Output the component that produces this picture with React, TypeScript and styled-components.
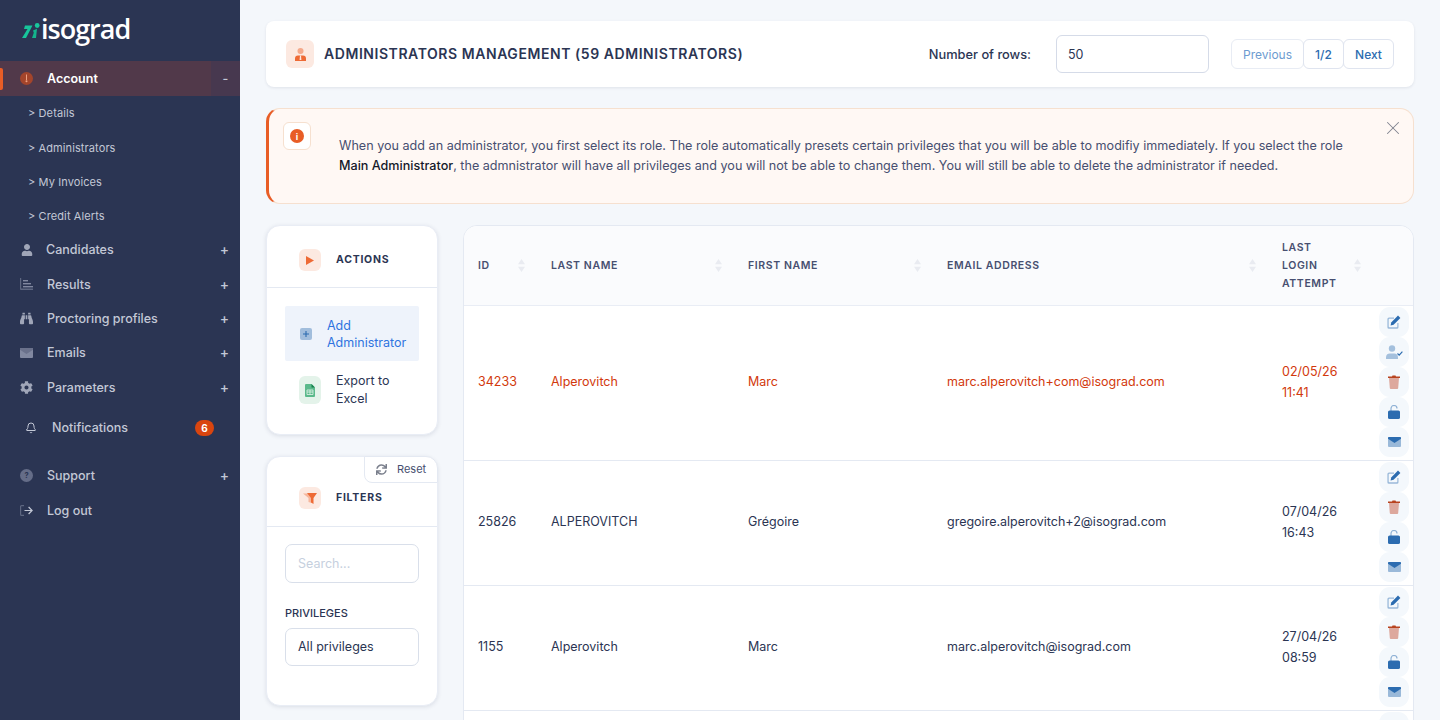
import React from "react";
import styled, { createGlobalStyle } from "styled-components";
import { FaBinoculars, FaCog, FaSync, FaUser } from "react-icons/fa";
import { Bell, X } from "lucide-react";

const GlobalStyle = createGlobalStyle`
  html, body {
    margin: 0;
    height: 720px;
    overflow: hidden;
    background: #f4f7fb;
    font-family: Inter, "Noto Sans", sans-serif;
    color: #2b3553;
  }
  * {
    box-sizing: border-box;
  }
`;

const Layout = styled.div`
  display: flex;
  width: 1440px;
  height: 720px;
  overflow: hidden;
`;

/* sidebar */
const Sidebar = styled.aside`
  flex: 0 0 240px;
  background: #2b3553;
  color: #c3c8d6;
`;
const LogoRow = styled.div`
  height: 61px;
  display: flex;
  align-items: center;
  padding: 0 0 0 22px;
  gap: 1px;
`;
const LogoText = styled.span`
  font-family: "Open Sans", sans-serif;
  font-size: 27px;
  font-weight: 600;
  letter-spacing: -1px;
  color: #fff;
  line-height: 1;
  margin-top: -5px;
`;
const ActiveItem = styled.div`
  height: 35px;
  display: flex;
  align-items: stretch;
  position: relative;
  color: #fff;
  font-size: 12.5px;
  font-weight: 600;
  &::before {
    content: "";
    position: absolute;
    left: 0;
    top: 7px;
    width: 3px;
    height: 22px;
    background: #e85d26;
    border-radius: 0 2px 2px 0;
  }
`;
const ActiveLabel = styled.div`
  flex: 1;
  display: flex;
  align-items: center;
  background: #51394a;
  padding: 0 0 0 20px;
  gap: 14px;
`;
const ActiveToggle = styled.div`
  flex: 0 0 29px;
  display: flex;
  align-items: center;
  justify-content: center;
  background: #47384f;
  color: #c3c8d6;
  font-weight: 500;
`;
const SubItem = styled.div`
  height: 34.4px;
  display: flex;
  align-items: center;
  padding-left: 28px;
  font-size: 11px;
  letter-spacing: 0.1px;
  color: #c3c8d6;
`;
const NavItem = styled.div`
  height: 34.4px;
  display: flex;
  align-items: center;
  padding: 0 11px 2px 20px;
  font-size: 12.5px;
  font-weight: 500;
  color: #c3c8d6;
`;
const NavIcon = styled.span<{ $labelGap?: number; $tone?: string }>`
  flex: 0 0 13px;
  margin-right: ${(p) => p.$labelGap ?? 14}px;
  display: flex;
  align-items: center;
  justify-content: center;
  color: ${(p) => p.$tone ?? "#8188a0"};
`;
const NavLabel = styled.span`
  flex: 1;
`;
const NotifyLabel = styled(NavLabel)`
  margin-left: 15px;
`;
const Plus = styled.span`
  font-size: 14px;
  font-weight: 500;
  color: #c3c8d6;
`;
const NotifyItem = styled.div`
  height: 44px;
  margin-bottom: 10px;
  display: flex;
  align-items: center;
  padding: 0 26px 0 25px;
  font-size: 12.5px;
  font-weight: 500;
  color: #c3c8d6;
`;
const Badge = styled.span`
  width: 19px;
  height: 16px;
  border-radius: 8px;
  background: #d9450f;
  color: #fff;
  font-size: 10px;
  font-weight: 700;
  display: flex;
  align-items: center;
  justify-content: center;
`;

/* main column */
const Main = styled.main`
  flex: 1;
  padding: 21px 26px 0;
  display: flex;
  flex-direction: column;
  gap: 21px;
  min-width: 0;
`;
const TopCard = styled.section`
  height: 66px;
  flex: none;
  background: #fff;
  border-radius: 8px;
  box-shadow: 0 1px 3px rgba(43, 53, 83, 0.1);
  display: flex;
  align-items: center;
  padding: 0 21px 0 20px;
`;
const IconBox = styled.span<{ $size?: number; $tall?: boolean; $bg?: string }>`
  flex: none;
  width: ${(p) => p.$size ?? 22}px;
  height: ${(p) => (p.$tall ? 28 : p.$size ?? 22)}px;
  background: ${(p) => p.$bg ?? "#fce9e1"};
  border-radius: 6px;
  display: flex;
  align-items: center;
  justify-content: center;
`;
const PageTitle = styled.h1`
  flex: 1;
  margin: 0 0 2px 10px;
  font-size: 14px;
  font-weight: 600;
  letter-spacing: 0.56px;
  color: #2b3553;
`;
const RowsLabel = styled.label`
  font-size: 12.8px;
  font-weight: 500;
  color: #2b3553;
  margin-right: 25px;
`;
const RowsInput = styled.div`
  width: 153px;
  height: 38px;
  border: 1px solid #d5dbe8;
  border-radius: 6px;
  padding: 0 11px;
  font-size: 12.5px;
  display: flex;
  align-items: center;
  margin-right: 22px;
`;
const Pager = styled.div`
  display: flex;
`;
const PageButton = styled.span<{ $muted?: boolean; $w: number }>`
  width: ${(p) => p.$w}px;
  height: 30px;
  margin-right: -1px;
  border: 1px solid ${(p) => (p.$muted ? "#e8ecf4" : "#dfe4ef")};
  border-radius: 6px;
  display: flex;
  align-items: center;
  justify-content: center;
  font-size: 12px;
  font-weight: ${(p) => (p.$muted ? 400 : 500)};
  color: ${(p) => (p.$muted ? "#6d9bd0" : "#2c6cb0")};
  background: #fff;
`;

const Alert = styled.section`
  height: 96px;
  flex: none;
  background: #fff8f4;
  border: 1px solid #f6e0cf;
  border-left: 3px solid #e85d26;
  border-radius: 14px;
  position: relative;
  display: flex;
  padding: 13px 60px 0 14px;
`;
const AlertIconBox = styled.span`
  flex: none;
  width: 28px;
  height: 28px;
  background: #fff;
  border: 1px solid #f6e0cf;
  border-radius: 6px;
  display: flex;
  align-items: center;
  justify-content: center;
  margin-right: 28px;
`;
const AlertDot = styled.span`
  width: 14px;
  height: 14px;
  border-radius: 50%;
  background: #e85d26;
  color: #fff;
  font-size: 9px;
  font-weight: 700;
  display: flex;
  align-items: center;
  justify-content: center;
`;
const AlertText = styled.p`
  margin: 14px 0 0;
  font-size: 12.6px;
  line-height: 19.5px;
  color: #474f70;
  b {
    font-weight: 500;
    color: #14182a;
  }
`;
const CloseButton = styled.span`
  position: absolute;
  right: 9px;
  top: 8px;
  color: #80848f;
  display: flex;
`;

const Content = styled.div`
  display: flex;
  gap: 25px;
  align-items: flex-start;
`;
const LeftColumn = styled.div`
  flex: 0 0 172px;
  display: flex;
  flex-direction: column;
  gap: 21px;
`;
const SideCard = styled.section<{ $height: number }>`
  height: ${(p) => p.$height}px;
  position: relative;
  background: #fff;
  border: 1px solid #e9edf5;
  border-radius: 14px;
  box-shadow: 0 1px 4px rgba(43, 53, 83, 0.12);
`;
const CardHead = styled.div<{ $height: number; $pad: number }>`
  height: ${(p) => p.$height}px;
  padding: ${(p) => p.$pad}px 0 0 32px;
  border-bottom: 1px solid #e4e9f2;
  display: flex;
  align-items: flex-start;
  gap: 15px;
`;
const CardTitle = styled.h3`
  margin: 0;
  line-height: 22px;
  font-size: 10.5px;
  font-weight: 700;
  letter-spacing: 0.75px;
  color: #2b3553;
`;
const CardBody = styled.div<{ $pad: number }>`
  padding: ${(p) => p.$pad}px 18px 0;
`;
const AddAction = styled.div`
  height: 55px;
  background: #eef3fb;
  border-radius: 2px;
  display: flex;
  align-items: center;
  padding-left: 15px;
  gap: 15px;
  font-size: 12.5px;
  line-height: 17px;
  color: #2f74e0;
`;
const ExportAction = styled.div`
  display: flex;
  align-items: center;
  padding: 11px 0 0 14px;
  gap: 15px;
  font-size: 12.5px;
  line-height: 18px;
  color: #2b3553;
`;
const ResetTab = styled.span`
  position: absolute;
  right: -1px;
  top: -1px;
  width: 74px;
  height: 27px;
  border: 1px solid #e4e9f2;
  border-top-right-radius: 12px;
  border-bottom-left-radius: 8px;
  background: #fff;
  display: flex;
  align-items: center;
  gap: 10px;
  padding: 0 0 1px 11px;
  font-size: 11px;
  color: #474f70;
`;
const FieldBox = styled.div<{ $height: number; $placeholder?: boolean }>`
  height: ${(p) => p.$height}px;
  border: 1px solid #d9dfea;
  border-radius: 7px;
  padding: 0 12px 1px;
  display: flex;
  align-items: center;
  font-size: 12.5px;
  color: ${(p) => (p.$placeholder ? "#c6d0de" : "#2b3553")};
`;
const FieldLabel = styled.div`
  margin: 23px 0 8px;
  font-size: 11px;
  line-height: 14px;
  font-weight: 500;
  color: #2b3553;
`;

/* table */
const TableCard = styled.section`
  flex: 1;
  min-width: 0;
  background: #fff;
  border: 1px solid #e4e9f2;
  border-radius: 14px 14px 0 0;
  height: 520px;
  overflow: hidden;
`;
const cols = "73px 197px 199px 335px 105px 1fr";
const HeadRow = styled.div`
  display: grid;
  grid-template-columns: ${cols};
  height: 80px;
  background: #fafbfd;
  border-bottom: 1px solid #e9edf5;
`;
const HeadCell = styled.div`
  display: flex;
  align-items: center;
  justify-content: space-between;
  padding: 0 12px 0 14px;
  font-size: 10.5px;
  font-weight: 600;
  letter-spacing: 0.6px;
  line-height: 18px;
  color: #474f70;
`;
const HeadLabel = styled.span<{ $wrap?: boolean }>`
  max-width: ${(p) => (p.$wrap ? "62px" : "none")};
`;
const Row = styled.div<{ $alert?: boolean }>`
  display: grid;
  grid-template-columns: ${cols};
  border-bottom: 1px solid #e4e9f2;
  padding: 1px 0 3px;
  align-items: center;
  font-size: 12.5px;
  color: ${(p) => (p.$alert ? "#d2390c" : "#2b3553")};
`;
const Cell = styled.div`
  padding: 0 0 2px 14px;
  line-height: 21px;
`;
const DateCell = styled(Cell)`
  padding-bottom: 0;
  max-width: 78px;
`;
const ActionStack = styled.div`
  display: flex;
  flex-direction: column;
  padding-left: 6px;
`;
const ActionButton = styled.span`
  width: 30px;
  height: 30px;
  border-radius: 11px;
  background: #f4f8fc;
  display: flex;
  align-items: center;
  justify-content: center;
`;

/* drawings */
const Mark = () => (
  <svg width="18" height="16" viewBox="0 0 18 16">
    <path d="M3 2.500H10.500L4 15H0L5.500 6H2Z" fill="#17c59b" />
    <circle cx="15.200" cy="2.500" r="2.400" fill="#19c79c" />
    <path d="M11 7.500L15 5.800L14 15H10L11.800 9.800Z" fill="#14b48c" />
  </svg>
);
const Info = () => (
  <svg width="13" height="13" viewBox="0 0 13 13">
    <circle cx="6.500" cy="6.500" r="6.500" fill="#c04a22" opacity="0.75" />
    <rect x="6" y="2.500" width="1" height="5.500" fill="#f0a080" />
    <circle cx="6.500" cy="9.200" r="1" fill="#f0a080" />
  </svg>
);
const Results = () => (
  <svg width="13" height="12" viewBox="0 0 13 12" fill="currentColor">
    <path d="M0 0h1.200v10.600H13V12H1a1 1 0 0 1-1-1z" opacity="0.6" />
    <rect x="3" y="2" width="5" height="1.400" />
    <rect x="3" y="5" width="8" height="1.400" />
    <rect x="3" y="8" width="10" height="1.400" />
  </svg>
);
const Mail = ({ w = 13, body = "#8188a0", flap = "#c3c8d6", bodyOpacity = 1 }: { w?: number; body?: string; flap?: string; bodyOpacity?: number }) => (
  <svg width={w} height={(w * 10) / 13} viewBox="0 0 13 10">
    <rect width="13" height="10" rx="1" fill={body} opacity={bodyOpacity} />
    <path d="M0 1a1 1 0 0 1 1-1h11a1 1 0 0 1 1 1v.8L6.500 6 0 1.800z" fill={flap} />
  </svg>
);
const Question = () => (
  <svg width="13" height="13" viewBox="0 0 13 13">
    <circle cx="6.500" cy="6.500" r="6.500" fill="#656d88" />
    <text x="6.500" y="9.200" textAnchor="middle" fontSize="7.500" fontWeight="700" fill="#2b3553" fontFamily="Inter, sans-serif">?</text>
  </svg>
);
const Logout = () => (
  <svg width="13" height="11" viewBox="0 0 13 11" fill="none" stroke="currentColor" strokeWidth="1.200">
    <path d="M4 .6H1.600a1 1 0 0 0-1 1v7.800a1 1 0 0 0 1 1H4" opacity="0.6" />
    <path d="M4.500 5.500H12M8.600 2l3.500 3.500L8.600 9" stroke="#c3c8d6" />
  </svg>
);
const AdminIcon = () => (
  <svg width="11" height="13" viewBox="0 0 11 13">
    <circle cx="5.500" cy="3" r="3" fill="#ee6a35" opacity="0.5" />
    <path d="M0 13v-2.500A3 3 0 0 1 3 7.500h5a3 3 0 0 1 3 3V13z" fill="#ee6a35" />
    <path d="M5 7.500h1l.4 4.500H4.600z" fill="#fce9e1" />
  </svg>
);
const Play = () => (
  <svg width="8" height="9" viewBox="0 0 9 10">
    <path d="M0 0 L9 5 L0 10 Z" fill="#ee6a35" />
  </svg>
);
const Funnel = () => (
  <svg width="14" height="11" viewBox="0 0 14 11">
    <path d="M0 .5h6l2.500 3.500v6L5.500 9V5z" fill="#ee6a35" opacity="0.4" />
    <path d="M4 0h10L10.500 5v6L8 9.500V5z" fill="#ee6a35" />
  </svg>
);
const AddIcon = () => (
  <svg width="12" height="12" viewBox="0 0 12 12">
    <rect width="12" height="12" rx="2" fill="#2c6cb0" opacity="0.4" />
    <path d="M6 3v6M3 6h6" stroke="#2c6cb0" strokeWidth="1.100" />
  </svg>
);
const Sheet = () => (
  <svg width="10" height="13" viewBox="0 0 10 13">
    <path d="M1 0h5.500L10 3.500V12a1 1 0 0 1-1 1H1a1 1 0 0 1-1-1V1a1 1 0 0 1 1-1z" fill="#2ea66b" opacity="0.75" />
    <path d="M6.500 0L10 3.500H6.500z" fill="#17804c" />
    <path d="M2 6h6v4.500H2z M2 8h6 M5 6v4.500" fill="none" stroke="#e4f3ea" strokeWidth="0.800" />
  </svg>
);
const Edit = () => (
  <svg width="14" height="14" viewBox="0 0 14 14">
    <path d="M2 2.500h5v1.200H2.400a.7.7 0 0 0-.7.7v7.200c0 .4.3.7.7.7h7.200c.4 0 .7-.3.7-.7V8h1.200v4.200a1.600 1.600 0 0 1-1.600 1.600H2A1.600 1.600 0 0 1 .4 12.200V4.100A1.600 1.600 0 0 1 2 2.500z" fill="#2c6cb0" opacity="0.45" />
    <path d="M11 .6l2.400 2.400-6.800 6.800-3 .6.600-3z" fill="#2c6cb0" />
  </svg>
);
const UserCheck = () => (
  <svg width="17" height="14" viewBox="0 0 17 14">
    <circle cx="6" cy="3.500" r="3.200" fill="#2c6cb0" opacity="0.4" />
    <path d="M0 14v-1.500A4 4 0 0 1 4 8.500h4a4 4 0 0 1 4 4V14z" fill="#2c6cb0" opacity="0.4" />
    <path d="M11.500 8.500l1.700 1.600 3.200-3.400" fill="none" stroke="#2c6cb0" strokeWidth="1.200" />
  </svg>
);
const Trash = () => (
  <svg width="12" height="14" viewBox="0 0 12 14">
    <path d="M1 3h10l-.8 10a1 1 0 0 1-1 1H2.800a1 1 0 0 1-1-1z" fill="#c0482a" opacity="0.45" />
    <path d="M0 1.500h4L4.500.6h3l.5.9h4V3H0z" fill="#b8431f" />
  </svg>
);
const Lock = () => (
  <svg width="12" height="14" viewBox="0 0 12 14">
    <path d="M3 6V3.500a3 3 0 0 1 6 0" fill="none" stroke="#2c6cb0" strokeWidth="1.200" opacity="0.5" />
    <rect y="5.500" width="12" height="8.500" rx="1.600" fill="#2c6cb0" />
  </svg>
);

const SortArrows = () => (
  <svg width="7" height="15" viewBox="0 0 8 15">
    <path d="M4 0l4 6H0z M4 15L0 9h8z" fill="#e9ebf1" />
  </svg>
);

const admins = [
  { id: "34233", last: "Alperovitch", first: "Marc", email: "marc.alperovitch+com@isograd.com", date: "02/05/26 11:41", alert: true },
  { id: "25826", last: "ALPEROVITCH", first: "Grégoire", email: "gregoire.alperovitch+2@isograd.com", date: "07/04/26 16:43" },
  { id: "1155", last: "Alperovitch", first: "Marc", email: "marc.alperovitch@isograd.com", date: "27/04/26 08:59" },
  { id: "", last: "", first: "", email: "", date: "" },
];

const headings = ["ID", "LAST NAME", "FIRST NAME", "EMAIL ADDRESS"];

const subLinks = ["Details", "Administrators", "My Invoices", "Credit Alerts"];

export default function App() {
  return (
    <>
      <GlobalStyle />
      <Layout>
        <Sidebar>
          <LogoRow>
            <Mark />
            <LogoText>isograd</LogoText>
          </LogoRow>
          <ActiveItem>
            <ActiveLabel>
              <Info />
              Account
            </ActiveLabel>
            <ActiveToggle>-</ActiveToggle>
          </ActiveItem>
          {subLinks.map((link) => (
            <SubItem key={link}>&gt; {link}</SubItem>
          ))}
          <NavItem>
            <NavIcon $labelGap={13} $tone="#a0a6b8">
              <FaUser size={12} />
            </NavIcon>
            <NavLabel>Candidates</NavLabel>
            <Plus>+</Plus>
          </NavItem>
          <NavItem>
            <NavIcon>
              <Results />
            </NavIcon>
            <NavLabel>Results</NavLabel>
            <Plus>+</Plus>
          </NavItem>
          <NavItem>
            <NavIcon $tone="#a0a6b8">
              <FaBinoculars size={13} />
            </NavIcon>
            <NavLabel>Proctoring profiles</NavLabel>
            <Plus>+</Plus>
          </NavItem>
          <NavItem>
            <NavIcon>
              <Mail body="#8188a0" flap="#6a718b" />
            </NavIcon>
            <NavLabel>Emails</NavLabel>
            <Plus>+</Plus>
          </NavItem>
          <NavItem>
            <NavIcon $tone="#a0a6b8">
              <FaCog size={13} />
            </NavIcon>
            <NavLabel>Parameters</NavLabel>
            <Plus>+</Plus>
          </NavItem>
          <NotifyItem>
            <Bell size={12} color="#c3c8d6" />
            <NotifyLabel>Notifications</NotifyLabel>
            <Badge>6</Badge>
          </NotifyItem>
          <NavItem>
            <NavIcon>
              <Question />
            </NavIcon>
            <NavLabel>Support</NavLabel>
            <Plus>+</Plus>
          </NavItem>
          <NavItem>
            <NavIcon>
              <Logout />
            </NavIcon>
            <NavLabel>Log out</NavLabel>
          </NavItem>
        </Sidebar>

        <Main>
          <TopCard>
            <IconBox $size={28}>
              <AdminIcon />
            </IconBox>
            <PageTitle>ADMINISTRATORS MANAGEMENT (59 ADMINISTRATORS)</PageTitle>
            <RowsLabel>Number of rows:</RowsLabel>
            <RowsInput>50</RowsInput>
            <Pager>
              <PageButton $muted $w={73}>Previous</PageButton>
              <PageButton $w={41}>1/2</PageButton>
              <PageButton $w={51}>Next</PageButton>
            </Pager>
          </TopCard>

          <Alert>
            <AlertIconBox>
              <AlertDot>i</AlertDot>
            </AlertIconBox>
            <AlertText>
              When you add an administrator, you first select its role. The role automatically presets certain privileges that you will be able to modifiy immediately. If you select the role <b>Main Administrator</b>, the admnistrator will have all privileges and you will not be able to change them. You will still be able to delete the administrator if needed.
            </AlertText>
            <CloseButton>
              <X size={22} strokeWidth={1.1} />
            </CloseButton>
          </Alert>

          <Content>
            <LeftColumn>
              <SideCard $height={210}>
                <CardHead $height={62} $pad={23}>
                  <IconBox>
                    <Play />
                  </IconBox>
                  <CardTitle>ACTIONS</CardTitle>
                </CardHead>
                <CardBody $pad={18}>
                  <AddAction>
                    <AddIcon />
                    <span>
                      Add
                      <br />
                      Administrator
                    </span>
                  </AddAction>
                  <ExportAction>
                    <IconBox $bg="#e4f3ea" $tall>
                      <Sheet />
                    </IconBox>
                    <span>
                      Export to
                      <br />
                      Excel
                    </span>
                  </ExportAction>
                </CardBody>
              </SideCard>

              <SideCard $height={250}>
                <ResetTab>
                  <FaSync size={11} color="#7a7f8c" />
                  Reset
                </ResetTab>
                <CardHead $height={70} $pad={30}>
                  <IconBox>
                    <Funnel />
                  </IconBox>
                  <CardTitle>FILTERS</CardTitle>
                </CardHead>
                <CardBody $pad={17}>
                  <FieldBox $height={39} $placeholder>
                    Search...
                  </FieldBox>
                  <FieldLabel>PRIVILEGES</FieldLabel>
                  <FieldBox $height={38}>All privileges</FieldBox>
                </CardBody>
              </SideCard>
            </LeftColumn>

            <TableCard>
              <HeadRow>
                {headings.map((h) => (
                  <HeadCell key={h}>
                    <HeadLabel>{h}</HeadLabel>
                    <SortArrows />
                  </HeadCell>
                ))}
                <HeadCell>
                  <HeadLabel $wrap>LAST LOGIN ATTEMPT</HeadLabel>
                  <SortArrows />
                </HeadCell>
                <div />
              </HeadRow>
              {admins.map((a, i) => (
                <Row key={i} $alert={a.alert}>
                  <Cell>{a.id}</Cell>
                  <Cell>{a.last}</Cell>
                  <Cell>{a.first}</Cell>
                  <Cell>{a.email}</Cell>
                  <DateCell>{a.date}</DateCell>
                  <ActionStack>
                    <ActionButton>
                      <Edit />
                    </ActionButton>
                    {a.alert && (
                      <ActionButton>
                        <UserCheck />
                      </ActionButton>
                    )}
                    <ActionButton>
                      <Trash />
                    </ActionButton>
                    <ActionButton>
                      <Lock />
                    </ActionButton>
                    <ActionButton>
                      <Mail w={13} body="#2c6cb0" bodyOpacity={0.45} flap="#2c6cb0" />
                    </ActionButton>
                  </ActionStack>
                </Row>
              ))}
            </TableCard>
          </Content>
        </Main>
      </Layout>
    </>
  );
}
